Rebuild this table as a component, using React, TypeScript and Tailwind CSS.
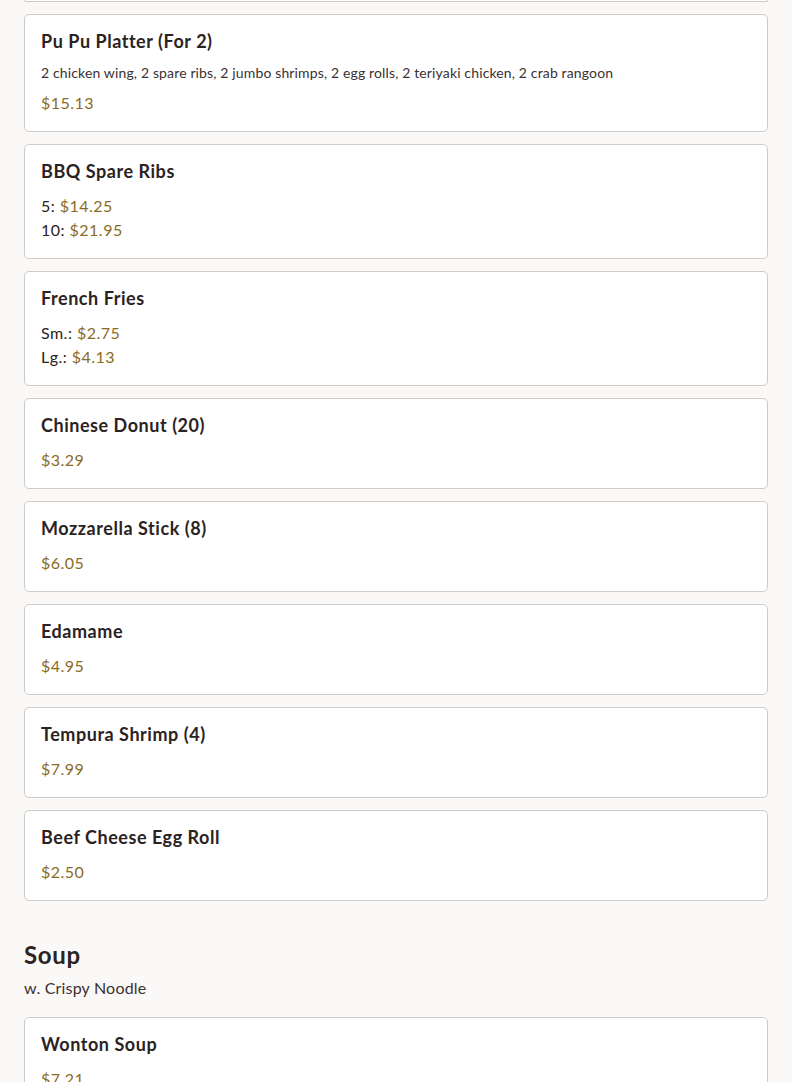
const appetizers = [
  {
    name: "Pu Pu Platter (For 2)",
    description: "2 chicken wing, 2 spare ribs, 2 jumbo shrimps, 2 egg rolls, 2 teriyaki chicken, 2 crab rangoon",
    prices: [{ price: "$15.13" }],
  },
  {
    name: "BBQ Spare Ribs",
    prices: [
      { label: "5", price: "$14.25" },
      { label: "10", price: "$21.95" },
    ],
  },
  {
    name: "French Fries",
    prices: [
      { label: "Sm.", price: "$2.75" },
      { label: "Lg.", price: "$4.13" },
    ],
  },
  { name: "Chinese Donut (20)", prices: [{ price: "$3.29" }] },
  { name: "Mozzarella Stick (8)", prices: [{ price: "$6.05" }] },
  { name: "Edamame", prices: [{ price: "$4.95" }] },
  { name: "Tempura Shrimp (4)", prices: [{ price: "$7.99" }] },
  { name: "Beef Cheese Egg Roll", prices: [{ price: "$2.50" }] },
];

const soups = [{ name: "Wonton Soup", prices: [{ price: "$7.21" }] }];

type Item = {
  name: string;
  description?: string;
  prices: { label?: string; price: string }[];
};

function MenuCard({ item }: { item: Item }) {
  return (
    <div className="bg-white border border-[#cfcbc8] rounded-[5px] px-4 py-4">
      <h3 className="text-[18px] leading-[21px] font-bold tracking-[0.03em] text-[#2b2222]">{item.name}</h3>
      {item.description && (
        <p className="mt-[11px] text-[14px] leading-[20px] tracking-[0.01em] text-[#3b3131]">{item.description}</p>
      )}
      <div className={item.description ? "mt-2" : "mt-3"}>
        {item.prices.map((p, i) => (
          <div key={i} className="text-[16px] leading-[24px] tracking-[0.03em] text-[#2b2222]">
            {p.label && <span>{p.label}: </span>}
            <span className="text-[#8b6b23]">{p.price}</span>
          </div>
        ))}
      </div>
    </div>
  );
}

export default function App() {
  return (
    <div
      className="min-h-screen bg-[#faf9f7] px-6"
      style={{ fontFamily: "Lato, 'Noto Sans', sans-serif" }}
    >
      {/* tail of the card above */}
      <div className="h-[2px] bg-white border-x border-b border-[#cfcbc8] rounded-b-[5px]"></div>

      <div className="flex flex-col gap-3 mt-3">
        {appetizers.map((item, i) => (
          <MenuCard key={i} item={item} />
        ))}
      </div>

      {/* Soup */}
      <section className="mt-[38px]">
        <h2 className="text-[24px] leading-[32px] font-bold tracking-[0.03em] text-[#2b2222]">Soup</h2>
        <p className="mt-[5px] text-[16px] leading-[24px] tracking-[0.012em] text-[#3b3131]">w. Crispy Noodle</p>
        <div className="flex flex-col gap-3 mt-[17px]">
          {soups.map((item, i) => (
            <MenuCard key={i} item={item} />
          ))}
        </div>
      </section>
    </div>
  );
}
